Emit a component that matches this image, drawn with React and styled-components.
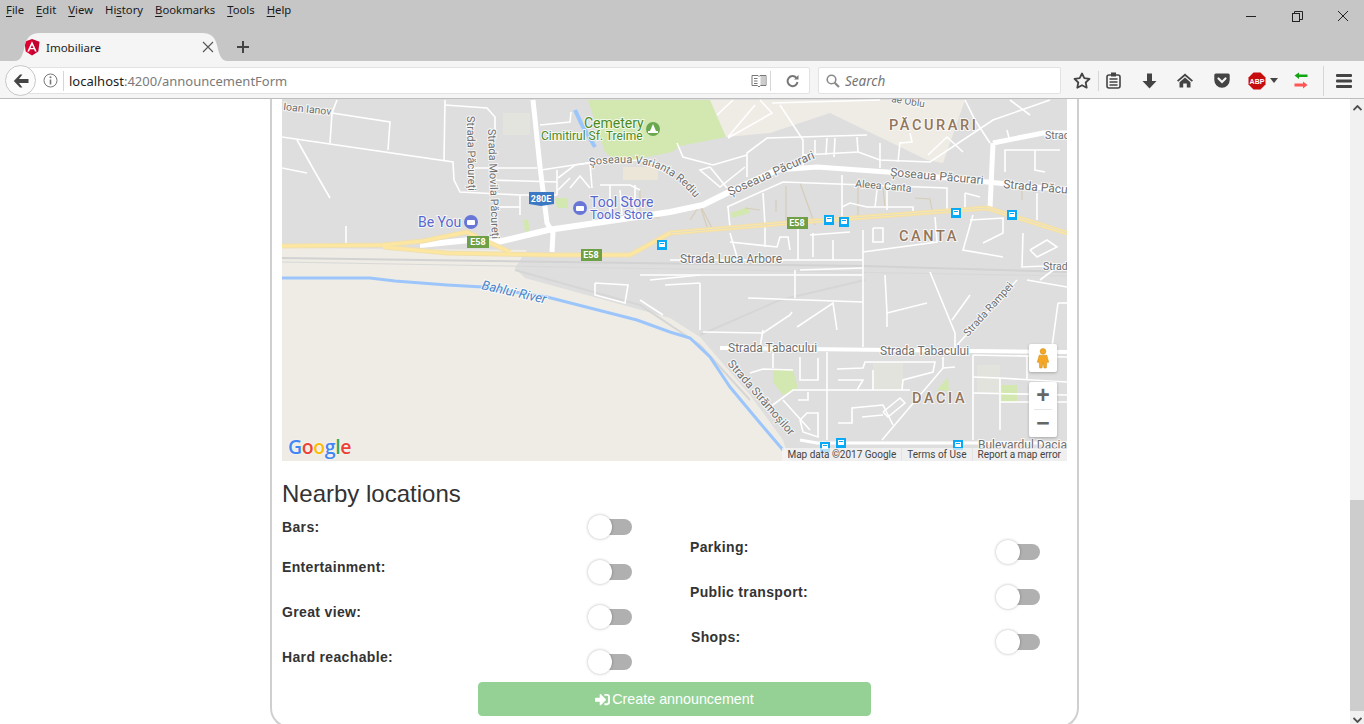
import React from 'react';
import styled, { createGlobalStyle } from 'styled-components';
import { FaSignInAlt } from 'react-icons/fa';

const GlobalStyle = createGlobalStyle`
  html, body {
    margin: 0;
    height: 100%;
    overflow: hidden;
    background: #fff;
    font-family: "Liberation Sans", Arial, sans-serif;
  }
`;

const Window = styled.div`
  display: flex;
  flex-direction: column;
  height: 724px;
  overflow: hidden;
`;

const TitleBar = styled.div`
  background: #c6c6c6;
  height: 61px;
  display: flex;
  flex-direction: column;
`;

const MenuRow = styled.div`
  height: 33px;
  display: flex;
  justify-content: space-between;
`;

const Menu = styled.div`
  display: flex;
  gap: 12px;
  padding: 2px 0 0 6px;
  font: 11.3px/15px "Noto Sans", "Open Sans", sans-serif;
  color: #1a1a1a;
  span u { text-underline-offset: 2px; }
`;

const WindowControls = styled.div`
  display: flex;
  width: 138px;
`;

const WinButton = styled.div`
  width: 46px;
  height: 32px;
  box-sizing: border-box;
  padding-left: 4px;
  display: flex;
  align-items: center;
  justify-content: center;
`;

const TabRow = styled.div`
  height: 28px;
  display: flex;
  padding-left: 14px;
`;

const Tab = styled.div`
  width: 214px;
  height: 28px;
  background: #f5f5f5;
  clip-path: path('M0 28 C8 28 9 20 11 12 C13 4 17 0 26 0 H188 C197 0 201 4 203 12 C205 20 206 28 214 28 Z');
  display: flex;
  align-items: center;
  padding: 0 14px 0 10px;
  box-sizing: border-box;
  gap: 6px;
  font: 11.5px "Noto Sans", "Open Sans", sans-serif;
  color: #222;
`;

const TabTitle = styled.span`
  flex: 1;
`;

const NewTab = styled.div`
  width: 30px;
  display: flex;
  align-items: center;
  justify-content: center;
`;

const Toolbar = styled.div`
  height: 38px;
  box-sizing: border-box;
  background: #f5f5f5;
  border-bottom: 1px solid #bdbdbd;
  display: flex;
  align-items: center;
  padding: 2px 0 0 5px;
`;

const BackButton = styled.div`
  width: 31px;
  height: 31px;
  box-sizing: border-box;
  border-radius: 50%;
  border: 1px solid #c8c8c8;
  background: #fbfbfb;
  display: flex;
  align-items: center;
  justify-content: center;
  margin-right: -10px;
  z-index: 1;
`;

const UrlBar = styled.div`
  width: 784px;
  height: 27px;
  box-sizing: border-box;
  background: #fff;
  border: 1px solid #e2e2e2;
  border-radius: 2px;
  display: flex;
  align-items: center;
  padding-left: 14px;
  margin-right: 8px;
`;

const InfoSlot = styled.div`
  width: 18px;
  display: flex;
  justify-content: center;
  margin-right: 4px;
`;

const Divider = styled.div`
  width: 1px;
  height: ${(p) => p.$h || 20}px;
  background: #d6d6d6;
  flex: none;
`;

const Url = styled.div`
  flex: 1;
  padding-left: 5px;
  font: 13px "Noto Sans", "Open Sans", sans-serif;
  color: #7a7a7a;
  b { font-weight: 400; color: #1c1c1c; }
`;

const UrlAction = styled.div`
  width: ${(p) => p.$w}px;
  box-sizing: border-box;
  padding-left: ${(p) => p.$pad || 0}px;
  display: flex;
  justify-content: center;
`;

const SearchBar = styled.div`
  width: 243px;
  height: 27px;
  box-sizing: border-box;
  background: #fff;
  border: 1px solid #e2e2e2;
  border-radius: 2px;
  display: flex;
  align-items: center;
  gap: 5px;
  padding-left: 7px;
  font: italic 13.5px "Noto Sans", "Open Sans", sans-serif;
  color: #757575;
`;

const ToolSlot = styled.div`
  width: ${(p) => p.$w}px;
  flex: none;
  box-sizing: border-box;
  padding-left: ${(p) => p.$pad || 0}px;
  display: flex;
  justify-content: center;
  align-items: center;
`;

const Viewport = styled.div`
  flex: 1;
  display: flex;
  min-height: 0;
`;

const Page = styled.main`
  flex: 1;
  padding-left: 270px;
  overflow: hidden;
`;

const Scrollbar = styled.div`
  width: 14px;
  background: #f1f1f1;
  display: flex;
  flex-direction: column;
  align-items: center;
`;

const ScrollArrow = styled.div`
  height: 17px;
  flex: none;
  display: flex;
  align-items: center;
  justify-content: center;
`;

const ScrollThumb = styled.div`
  width: 14px;
  height: 211px;
  flex: none;
  margin-top: 384px;
  background: #cdcdcd;
`;

const Card = styled.div`
  width: 809px;
  height: 629px;
  box-sizing: border-box;
  border: 2px solid #cfcfcf;
  border-top: none;
  border-radius: 0 0 20px 20px;
  padding: 0 10px;
`;

const MapFrame = styled.div`
  position: relative;
  width: 785px;
  height: 362px;
  overflow: hidden;
  svg { display: block; }
`;

const MapLabel = styled.text`
  font-family: Roboto, "Liberation Sans", sans-serif;
  font-size: ${(p) => p.$size || 12}px;
  font-weight: ${(p) => p.$weight || 400};
  font-style: ${(p) => (p.$italic ? 'italic' : 'normal')};
  letter-spacing: ${(p) => p.$spacing || 0}px;
  fill: ${(p) => p.$color || '#6f6f6f'};
  stroke: rgba(255, 255, 255, 0.75);
  stroke-width: 2px;
  paint-order: stroke;
`;

const ShieldText = styled.text`
  font-family: Roboto, "Liberation Sans", sans-serif;
  font-size: 9px;
  font-weight: 700;
  fill: #fff;
  text-anchor: middle;
`;

const MapControl = styled.div`
  position: absolute;
  right: 10px;
  width: 28px;
  background: #fff;
  border-radius: 2px;
  box-shadow: 0 1px 3px rgba(0, 0, 0, 0.25);
  display: flex;
  flex-direction: column;
  align-items: center;
  justify-content: center;
`;

const Pegman = styled(MapControl)`
  bottom: 89px;
  height: 28px;
`;

const ZoomBox = styled(MapControl)`
  bottom: 24px;
  height: 55px;
`;

const ZoomButton = styled.div`
  height: 27px;
  width: 100%;
  display: flex;
  align-items: center;
  justify-content: center;
  font: 700 23px/27px "Liberation Sans", sans-serif;
  color: #666;
`;

const ZoomRule = styled.div`
  width: 18px;
  height: 1px;
  background: #e6e6e6;
`;

const Attribution = styled.div`
  position: absolute;
  right: 0;
  bottom: 0;
  height: 13px;
  display: flex;
  align-items: center;
  background: rgba(245, 245, 245, 0.72);
  font: 10px/13px Roboto, "Liberation Sans", sans-serif;
  color: #444;
  span {
    padding: 0 5px;
    border-left: 1px solid #e3e3e3;
    white-space: nowrap;
  }
  span:first-child { border-left: none; }
  span:last-child { padding-right: 6px; }
`;

const GoogleLogo = styled.div`
  position: absolute;
  left: 6px;
  bottom: 2px;
  font: 600 19.5px/24px "Open Sans", Roboto, sans-serif;
  letter-spacing: -0.4px;
  text-shadow: 0 0 2px rgba(255, 255, 255, 0.9);
`;

const LogoLetter = styled.span`
  color: ${(p) => p.$color};
`;

const SectionTitle = styled.h3`
  margin: 20px 0 10px;
  font: 400 24px/26px "Liberation Sans", Arial, sans-serif;
  color: #333;
`;

const Columns = styled.div`
  display: grid;
  grid-template-columns: 350px 350px;
  column-gap: 58px;
  height: 165px;
`;

const Column = styled.div`
  padding-top: ${(p) => p.$offset || 0}px;
`;

const Row = styled.div`
  height: ${(p) => (p.$flush ? 40 : 45)}px;
  display: flex;
  justify-content: space-between;
  align-items: flex-start;
`;

const RowLabel = styled.label`
  font: 700 14px/20px "Liberation Sans", Arial, sans-serif;
  letter-spacing: 0.35px;
  color: #333;
  padding-left: ${(p) => p.$nudge || 0}px;
`;

const Toggle = styled.div`
  position: relative;
  width: 45px;
  height: 16px;
  margin-top: ${(p) => (p.$flush ? 2 : 7)}px;
  display: flex;
  justify-content: flex-end;
`;

const ToggleTrack = styled.div`
  width: 32px;
  height: 16px;
  border-radius: 8px;
  background: #b0b0b0;
`;

const ToggleKnob = styled.div`
  position: absolute;
  left: 1px;
  top: -4px;
  width: 24px;
  height: 24px;
  border-radius: 50%;
  background: #fff;
  box-shadow: 0 0 3px rgba(0, 0, 0, 0.3);
`;

const SubmitRow = styled.div`
  display: flex;
  justify-content: center;
`;

const SubmitButton = styled.button`
  width: 393px;
  height: 34px;
  border: 1px solid #95d195;
  border-radius: 4px;
  background: #95d195;
  color: #fff;
  font: 14.3px "Liberation Sans", Arial, sans-serif;
  display: flex;
  align-items: center;
  justify-content: center;
  gap: 2px;
`;

const minorRoads = [
  '282,137 453,162 454,180 460,192 520,195 557,195', '337,100 332,113 330,143', '332,113 390,122 388,150', '297,140 315,172 330,198',
  '282,168 307,173', '346,226 346,243', '445,100 444,160', '445,105 487,108 495,117 495,130', '473,168 537,168',
  '490,180 557,182', '520,195 520,215', '500,207 520,207', '540,125 570,122 571,112', '541,170 587,163 640,160 670,168',
  '557,170 557,195', '558,178 575,165 590,163 592,188', '558,190 570,178', '570,188 580,176 590,188', '600,185 630,185 640,190',
  '635,185 635,215', '620,190 622,215', '610,185 610,218', '717,115 733,100', '728,137 755,105', '760,100 772,113 728,138',
  '780,105 803,140 803,170', '772,103 880,100', '747,177 747,153 767,138 867,135', '857,137 858,152 880,160 930,162 993,120 1050,100',
  '815,140 815,155', '827,138 826,155', '835,138 834,157', '803,155 858,152', '880,143 880,168', '900,142 898,162',
  '910,133 912,142 900,143', '928,155 947,137 963,152', '990,143 975,120 965,100', '1010,100 1030,115', '1007,130 1010,142',
  '1005,172 1005,150 1060,150', '1035,150 1035,170 1045,172', '677,143 683,157 713,165 747,155', '710,167 700,170 720,187 745,167',
  '710,167 727,188', '727,207 783,182 947,188 947,210', '728,207 730,228', '763,193 765,225', '842,175 842,217', '842,207 850,203 867,207 913,207 913,212',
  '877,190 875,207', '887,190 887,210', '965,193 965,208', '965,193 980,197', '670,260 863,260', '863,230 863,347', '863,252 937,242 935,217',
  '973,215 963,250 1003,257', '970,220 1003,218 1003,233 983,243', '1023,233 1022,267 1067,265', '1037,193 1037,220',
  '1030,250 1047,240 1057,247 1037,257 1030,250', '730,233 737,257', '765,225 765,247', '798,227 798,260', '813,233 813,257', '833,240 833,260',
  '810,235 850,232', '730,242 777,247 780,237 788,237 790,250', '873,228 883,228 883,242 873,242 873,228', '700,283 700,330',
  '703,332 763,333 790,315 792,312', '763,330 760,347', '748,298 863,302', '795,270 795,298', '797,327 833,303 837,330', '885,275 887,313 927,303',
  '887,313 887,327', '930,272 955,333 955,347', '952,320 970,295', '957,345 1017,280', '1027,280 1067,287', '1058,303 1052,347', '1067,303 1058,303',
  '773,353 773,368', '800,357 800,380 818,380 818,358', '750,373 763,369 793,370', '770,407 793,390 910,390', '827,352 827,440',
  '783,400 810,430', '798,400 808,400 808,392', '800,420 807,413 818,413 818,437 803,432 800,420', '837,369 863,368 865,362 935,362 933,372 903,380 902,390',
  '838,380 863,380 857,390', '873,370 873,390', '943,357 943,368 882,440', '955,367 943,368', '838,423 852,423 852,408 883,405 893,425', '862,417 883,415',
  '883,412 900,398 905,403 888,417 883,412', '973,355 973,440', '973,377 1000,378 1067,382', '973,393 1067,395', '1000,378 1000,430', '973,355 1067,357',
  '1027,355 1027,380', '1000,402 1067,402', '1040,280 1060,265', '665,285 700,283', '640,275 863,275', '650,280 700,275', '800,270 863,268',
  '595,283 595,295 625,303 628,285 595,283', '640,300 663,315',
];

const majorRoads = [
  ['533,100 540,167 547,223 553,233 552,252', 5],
  ['420,245 470,240 498,242 548,230 630,218 670,212 703,205 727,193 777,170', 6],
  ['777,170 817,167 887,172 987,182 1067,190', 5],
  ['993,143 990,208', 5],
  ['993,143 1043,133 1067,133', 5],
  ['720,348 1067,352', 4],
  ['800,440 817,443 1067,443', 3],
];

const tracks = [
  '690,220 700,205 712,228', '745,208 760,210', '776,200 776,212', '786,186 786,225', '800,183 815,225', '858,187 858,215', '883,188 885,207',
  '915,198 930,199 932,210', '640,215 640,190', '700,205 708,230', '623,215 660,218', '1022,190 1022,200', '1065,265 1022,267',
];

const parks = [
  '588,100 710,100 726,137 680,146 672,152 618,163 605,152',
  '773,370 793,370 798,388 783,395 773,382',
  '937,390 948,377 949,391',
  '1002,385 1017,385 1017,402 1002,402',
  '730,213 748,207 750,213 732,218',
  '555,198 568,198 568,208 557,208',
  '523,220 528,219 530,231 525,232',
];

const busStops = [[657, 240], [824, 215], [839, 217], [951, 208], [1007, 210], [820, 442], [836, 438], [953, 440]];

const highwayNorth = '282,246 383,245 423,241 467,232 477,237 510,252';
const highwayMain = '383,247 447,253 553,255 630,255 670,233 787,223 987,208 1067,233';

const MapDrawing = () => (
  <svg width="785" height="362" viewBox="282 99 785 362">
    <defs>
      <path id="varianta" d="M590 166 C610 162 645 160 664 172 C680 180 690 192 699 203" />
    </defs>
    <rect x="282" y="99" width="785" height="362" fill="#dedede" />
    <polygon points="282,248 527,250 515,268 525,278 670,318 700,337 750,395 783,440 790,461 282,461" fill="#efece5" />
    <polygon points="708,100 965,100 943,163 927,160 830,113 770,133 726,137" fill="#efece5" />
    <rect x="503" y="113" width="27" height="22" fill="#e4e4de" />
    <rect x="623" y="167" width="35" height="13" fill="#ebe6d7" />
    <rect x="873" y="363" width="30" height="27" fill="#e3e3de" />
    <rect x="977" y="365" width="23" height="28" fill="#e3e3de" />
    {parks.map((p) => <polygon key={p} points={p} fill="#d3e8b0" />)}
    <polyline points="575,110 582,125 595,147" fill="none" stroke="#9cc6fb" strokeWidth="4" />
    <polyline points="282,258 560,262 863,266 1067,272" fill="none" stroke="#d2d2d2" strokeWidth="2" />
    <polyline points="282,262 1067,276" fill="none" stroke="#d8d8d8" strokeWidth="1" />
    <polyline points="515,270 640,305 700,345 750,400" fill="none" stroke="#d6d6d6" strokeWidth="2" />
    <polyline points="700,335 780,300 865,280" fill="none" stroke="#d6d6d6" strokeWidth="2" />
    <polyline points="282,278 370,278 395,281 447,285 483,287 547,297 637,320 670,332 690,338 710,357 730,387 760,423 783,450" fill="none" stroke="#9cc6fb" strokeWidth="3" />
    {tracks.map((t) => <polyline key={t} points={t} fill="none" stroke="#d6cdb8" strokeWidth="1.2" />)}
    {minorRoads.map((r) => <polyline key={r} points={r} fill="none" stroke="#fff" strokeWidth="1.6" />)}
    {majorRoads.map(([r, w]) => <polyline key={r} points={r} fill="none" stroke="#fff" strokeWidth={w} />)}
    <g fill="none" stroke="#f0dfae" strokeLinejoin="round" strokeWidth="5">
      <polyline points={highwayNorth} />
      <polyline points={highwayMain} />
    </g>
    <g fill="none" stroke="#fde7a0" strokeLinejoin="round" strokeWidth="3">
      <polyline points={highwayNorth} />
      <polyline points={highwayMain} />
    </g>
    <polyline points="670,233 787,223 987,208 1067,233" fill="none" stroke="#e2dccb" strokeWidth="1" />
    {busStops.map(([x, y]) => (
      <g key={x}>
        <rect x={x} y={y} width="10" height="10" fill="#0aa9f5" />
        <rect x={x + 2} y={y + 2} width="6" height="5" fill="#fff" />
        <rect x={x + 3} y={y + 3} width="4" height="1" fill="#0aa9f5" />
      </g>
    ))}
    <rect x="467" y="236" width="22" height="12" fill="#6f9f46" />
    <ShieldText x="478" y="245">E58</ShieldText>
    <rect x="581" y="249" width="21" height="12" fill="#6f9f46" />
    <ShieldText x="591" y="258">E58</ShieldText>
    <rect x="787" y="217" width="21" height="12" fill="#6f9f46" />
    <ShieldText x="797" y="226">E58</ShieldText>
    <path d="M529 192 H554 V204 L541 206 L529 204 Z" fill="#3b78c4" />
    <ShieldText x="541" y="202">280E</ShieldText>

    <MapLabel x="584" y="128" $size={14} $color="#4b8b1d">Cemetery</MapLabel>
    <MapLabel x="541" y="140" $size={12} $color="#4b8b1d">Cimitirul Sf. Treime</MapLabel>
    <circle cx="653" cy="129" r="7" fill="#6aa84f" />
    <path d="M653 124 L656 131 H658 V133 H648 V131 H650 Z" fill="#fff" />
    <MapLabel x="418" y="227" $size={14} $color="#5668d0">Be You</MapLabel>
    <circle cx="471" cy="222" r="7" fill="#6876d8" />
    <rect x="467" y="220" width="8" height="5" rx="1" fill="#fff" />
    <MapLabel x="590" y="207" $size={14} $color="#5668d0">Tool Store</MapLabel>
    <MapLabel x="590" y="219" $size={12.5} $color="#5668d0">Tools Store</MapLabel>
    <circle cx="580" cy="208" r="7" fill="#6876d8" />
    <rect x="576" y="206" width="8" height="5" rx="1" fill="#fff" />

    <MapLabel x="889" y="130" $size={14.5} $weight={500} $spacing={2.6} $color="#92755a">PĂCURARI</MapLabel>
    <MapLabel x="899" y="241" $size={14.5} $weight={500} $spacing={2.6} $color="#92755a">CANTA</MapLabel>
    <MapLabel x="912" y="403" $size={14.5} $weight={500} $spacing={2.6} $color="#92755a">DACIA</MapLabel>

    <MapLabel x="283" y="110" $size={10.5} transform="rotate(6 283 110)">Ioan Ianov</MapLabel>
    <MapLabel x="467" y="116" $size={11} transform="rotate(89 467 116)">Strada Păcureți</MapLabel>
    <MapLabel x="488" y="129" $size={11} transform="rotate(88 488 129)">Strada Movila Păcureți</MapLabel>
    <MapLabel $size={11}><textPath href="#varianta">Șoseaua Varianta Rediu</textPath></MapLabel>
    <MapLabel x="730" y="196" transform="rotate(-24 730 196)">Șoseaua Păcurari</MapLabel>
    <MapLabel x="890" y="176" transform="rotate(5 890 176)">Șoseaua Păcurari</MapLabel>
    <MapLabel x="855" y="187" $size={10.5} transform="rotate(5 855 187)">Aleea Canta</MapLabel>
    <MapLabel x="1003" y="188" transform="rotate(5 1003 188)">Strada Păcurari</MapLabel>
    <MapLabel x="1045" y="139" $size={10.5}>Strada</MapLabel>
    <MapLabel x="680" y="263">Strada Luca Arbore</MapLabel>
    <MapLabel x="1043" y="270" $size={10.5}>Strada</MapLabel>
    <MapLabel x="728" y="352">Strada Tabacului</MapLabel>
    <MapLabel x="880" y="355">Strada Tabacului</MapLabel>
    <MapLabel x="968" y="337" $size={10.5} transform="rotate(-48 968 337)">Strada Rampei</MapLabel>
    <MapLabel x="727" y="364" $size={11.5} transform="rotate(49 727 364)">Strada Strămoșilor</MapLabel>
    <MapLabel x="978" y="449">Bulevardul Dacia</MapLabel>
    <MapLabel x="891" y="102" $size={10} transform="rotate(9 891 102)">ae Oblu</MapLabel>
    <MapLabel x="481" y="289" $size={13} $italic $color="#4a84c8" transform="rotate(13 481 289)">Bahlui River</MapLabel>
  </svg>
);

const PegmanIcon = () => (
  <svg width="14" height="21" viewBox="0 0 14 22">
    <circle cx="7" cy="3.5" r="3" fill="#f5a623" stroke="#c98a13" strokeWidth="0.5" />
    <path d="M3 7.5 H11 L13 15 H11 L10.5 21 H8 L7 15 L6 21 H3.5 L3 15 H1 Z" fill="#f5a623" stroke="#c98a13" strokeWidth="0.5" />
  </svg>
);

const AngularIcon = () => (
  <svg width="16" height="17" viewBox="0 0 16 17">
    <path d="M8 0 L0.5 2.7 L1.7 12.6 L8 16.5 Z" fill="#dd0031" />
    <path d="M8 0 L15.5 2.7 L14.3 12.6 L8 16.5 Z" fill="#c3002f" />
    <path d="M8 2.2 L3.3 12.6 H5.1 L6 10.3 H10 L10.9 12.6 H12.7 Z M8 6 L9.4 8.9 H6.6 Z" fill="#fff" fillRule="evenodd" />
  </svg>
);

const locationsLeft = ['Bars:', 'Entertainment:', 'Great view:', 'Hard reachable:'];
const locationsRight = ['Parking:', 'Public transport:', 'Shops:'];

const Switch = ({ flush }) => (
  <Toggle $flush={flush}>
    <ToggleTrack />
    <ToggleKnob />
  </Toggle>
);

export default function App() {
  return (
    <Window>
      <GlobalStyle />
      <TitleBar>
        <MenuRow>
          <Menu>
            <span><u>F</u>ile</span>
            <span><u>E</u>dit</span>
            <span><u>V</u>iew</span>
            <span>Hi<u>s</u>tory</span>
            <span><u>B</u>ookmarks</span>
            <span><u>T</u>ools</span>
            <span><u>H</u>elp</span>
          </Menu>
          <WindowControls>
            <WinButton>
              <svg width="11" height="11" viewBox="0 0 11 11"><path d="M0 5.5 H10" stroke="#222" /></svg>
            </WinButton>
            <WinButton>
              <svg width="11" height="11" viewBox="0 0 11 11" fill="none" stroke="#222"><rect x="0.5" y="2.5" width="7" height="8" /><path d="M2.5 2.5 V0.5 H10.5 V8.5 H7.5" /></svg>
            </WinButton>
            <WinButton>
              <svg width="12" height="12" viewBox="0 0 12 12"><path d="M1 1 L11 11 M11 1 L1 11" stroke="#222" /></svg>
            </WinButton>
          </WindowControls>
        </MenuRow>
        <TabRow>
          <Tab>
            <AngularIcon />
            <TabTitle>Imobiliare</TabTitle>
            <svg width="12" height="12" viewBox="0 0 12 12"><path d="M1 1 L11 11 M11 1 L1 11" stroke="#555" strokeWidth="1.1" /></svg>
          </Tab>
          <NewTab>
            <svg width="14" height="14" viewBox="0 0 14 14"><path d="M7 1 V13 M1 7 H13" stroke="#444" strokeWidth="2" /></svg>
          </NewTab>
        </TabRow>
      </TitleBar>

      <Toolbar>
        <BackButton>
          <svg width="16" height="14" viewBox="0 0 16 14"><path d="M7 0.5 L0.8 7 L7 13.5 L9.4 13.5 L6 9 H15.5 V5 H6 L9.4 0.5 Z" fill="#444" /></svg>
        </BackButton>
        <UrlBar>
          <InfoSlot>
            <svg width="15" height="15" viewBox="0 0 15 15" fill="none"><circle cx="7.5" cy="7.5" r="6.5" stroke="#777" /><path d="M7.5 6.5 V11.5" stroke="#777" strokeWidth="1.6" /><circle cx="7.5" cy="4.2" r="1" fill="#777" /></svg>
          </InfoSlot>
          <Divider />
          <Url><b>localhost</b>:4200/announcementForm</Url>
          <UrlAction $w={22}>
            <svg width="16" height="14" viewBox="0 0 16 14" fill="none" stroke="#777"><path d="M1 1.5 H7 L8 2.5 L9 1.5 H15 V11.5 H9.5 L8 13 L6.5 11.5 H1 Z" /><path d="M3 4.5 H6.5 M3 7 H6.5 M3 9.5 H6.5" /><path d="M9.5 2 H14.5 V11 H9.5 Z" fill="#ccc" stroke="none" /></svg>
          </UrlAction>
          <Divider />
          <UrlAction $w={38} $pad={4}>
            <svg width="13" height="14" viewBox="0 0 13 14" fill="none"><path d="M10.5 4 A5 5 0 1 0 11.5 8" stroke="#777" strokeWidth="2" /><path d="M8 5.5 H12.5 V1 Z" fill="#777" /></svg>
          </UrlAction>
        </UrlBar>
        <SearchBar>
          <svg width="14" height="14" viewBox="0 0 14 14" fill="none" stroke="#8a8a8a" strokeWidth="1.6"><circle cx="5.5" cy="5.5" r="4.3" /><path d="M8.7 8.7 L13 13" strokeWidth="2.2" /></svg>
          Search
        </SearchBar>
        <ToolSlot $w={37} $pad={4}>
          <svg width="18" height="17" viewBox="0 0 18 17"><path d="M9 1.5 L11.3 6.2 L16.5 6.9 L12.7 10.5 L13.7 15.7 L9 13.2 L4.3 15.7 L5.3 10.5 L1.5 6.9 L6.7 6.2 Z" fill="none" stroke="#444" strokeWidth="1.8" strokeLinejoin="round" /></svg>
        </ToolSlot>
        <Divider />
        <ToolSlot $w={28}>
          <svg width="15" height="17" viewBox="0 0 15 17"><rect x="1" y="3" width="13" height="13" rx="2" fill="none" stroke="#444" strokeWidth="1.6" /><rect x="5" y="0.5" width="5" height="4" fill="#444" /><path d="M3.5 7 H11.5 M3.5 10 H11.5 M3.5 13 H11.5" stroke="#444" strokeWidth="1.5" /></svg>
        </ToolSlot>
        <ToolSlot $w={44}>
          <svg width="15" height="16" viewBox="0 0 15 16"><path d="M5 0.5 H10 V8 H14.5 L7.5 15.5 L0.5 8 H5 Z" fill="#444" /></svg>
        </ToolSlot>
        <ToolSlot $w={28}>
          <svg width="16" height="15" viewBox="0 0 16 15" fill="#444"><path d="M8 0.5 L16 7.5 L14.8 8.8 L8 3 L1.2 8.8 L0 7.5 Z" /><path d="M8 4.5 L13.5 9.2 V14.5 H9.8 V10.5 H6.2 V14.5 H2.5 V9.2 Z" /></svg>
        </ToolSlot>
        <ToolSlot $w={45}>
          <svg width="16" height="15" viewBox="0 0 16 15"><path d="M1.8 0.5 H14.2 A1.5 1.5 0 0 1 15.7 2 V7 A7.7 7.7 0 0 1 0.3 7 V2 A1.5 1.5 0 0 1 1.8 0.5 Z" fill="#444" /><path d="M4.5 5.5 L8 9 L11.5 5.5" fill="none" stroke="#f5f5f5" strokeWidth="2.2" strokeLinecap="round" /></svg>
        </ToolSlot>
        <ToolSlot $w={26}>
          <svg width="18" height="18" viewBox="0 0 18 18"><polygon points="5.5,0.5 12.5,0.5 17.5,5.5 17.5,12.5 12.5,17.5 5.5,17.5 0.5,12.5 0.5,5.5" fill="#c70d0d" /><text x="9" y="11.8" textAnchor="middle" fontFamily="Liberation Sans" fontWeight="700" fontSize="7" fill="#fff">ABP</text></svg>
        </ToolSlot>
        <ToolSlot $w={8}>
          <svg width="8" height="5" viewBox="0 0 8 5"><path d="M0 0 H8 L4 5 Z" fill="#444" /></svg>
        </ToolSlot>
        <ToolSlot $w={45}>
          <svg width="14" height="17" viewBox="0 0 14 17"><path d="M0.5 3.5 L5 0.5 V2.5 H13.5 V5 H5 V7 Z" fill="#12a512" /><path d="M13.5 13 L9 16.5 V14.5 H0.5 V11.5 H9 V9.5 Z" fill="#f55" /></svg>
        </ToolSlot>
        <Divider $h={30} />
        <ToolSlot $w={40}>
          <svg width="16" height="14" viewBox="0 0 16 14" fill="#444"><rect width="16" height="3" rx="1" /><rect y="5.5" width="16" height="3" rx="1" /><rect y="11" width="16" height="3" rx="1" /></svg>
        </ToolSlot>
      </Toolbar>

      <Viewport>
        <Page>
          <Card>
            <MapFrame>
              <MapDrawing />
              <GoogleLogo>
                <LogoLetter $color="#4285f4">G</LogoLetter>
                <LogoLetter $color="#ea4335">o</LogoLetter>
                <LogoLetter $color="#fbbc05">o</LogoLetter>
                <LogoLetter $color="#4285f4">g</LogoLetter>
                <LogoLetter $color="#34a853">l</LogoLetter>
                <LogoLetter $color="#ea4335">e</LogoLetter>
              </GoogleLogo>
              <Pegman><PegmanIcon /></Pegman>
              <ZoomBox>
                <ZoomButton>+</ZoomButton>
                <ZoomRule />
                <ZoomButton>−</ZoomButton>
              </ZoomBox>
              <Attribution>
                <span>Map data ©2017 Google</span>
                <span>Terms of Use</span>
                <span>Report a map error</span>
              </Attribution>
            </MapFrame>

            <SectionTitle>Nearby locations</SectionTitle>
            <Columns>
              <Column>
                {locationsLeft.map((name, i) => (
                  <Row key={name} $flush={i === 0}>
                    <RowLabel>{name}</RowLabel>
                    <Switch flush={i === 0} />
                  </Row>
                ))}
              </Column>
              <Column $offset={20}>
                {locationsRight.map((name) => (
                  <Row key={name}>
                    <RowLabel $nudge={name === 'Shops:' ? 1 : 0}>{name}</RowLabel>
                    <Switch />
                  </Row>
                ))}
              </Column>
            </Columns>
            <SubmitRow>
              <SubmitButton disabled>
                <FaSignInAlt size={15} />
                Create announcement
              </SubmitButton>
            </SubmitRow>
          </Card>
        </Page>
        <Scrollbar>
          <ScrollArrow>
            <svg width="9" height="6" viewBox="0 0 9 6"><path d="M0.5 5 L4.5 1 L8.5 5" fill="none" stroke="#505050" strokeWidth="1.8" /></svg>
          </ScrollArrow>
          <ScrollThumb />
          <ScrollArrow>
            <svg width="9" height="6" viewBox="0 0 9 6"><path d="M0.5 1 L4.5 5 L8.5 1" fill="none" stroke="#505050" strokeWidth="1.8" /></svg>
          </ScrollArrow>
        </Scrollbar>
      </Viewport>
    </Window>
  );
}
